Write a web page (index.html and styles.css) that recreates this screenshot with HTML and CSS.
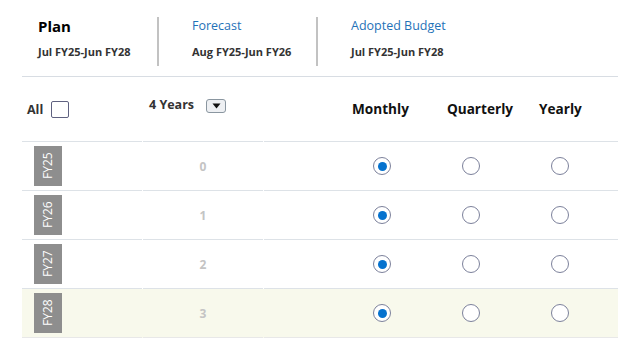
FILE: index.html
```html
<!DOCTYPE html>
<html>
<head>
    <title>Plan Periods</title>
    <link rel="stylesheet" href="styles.css">
</head>
<body>
    <div class="plan-page">
        <div class="summary">
            <div class="summary-item first">
                <div class="summary-title">Plan</div>
                <div class="summary-range">Jul FY25-Jun FY28</div>
            </div>
            <div class="summary-item">
                <a class="summary-link" href="#">Forecast</a>
                <div class="summary-range">Aug FY25-Jun FY26</div>
            </div>
            <div class="summary-item">
                <a class="summary-link" href="#">Adopted Budget</a>
                <div class="summary-range">Jul FY25-Jun FY28</div>
            </div>
        </div>

        <div class="period-table">
            <div class="row head">
                <div class="cell all-cell">
                    <span>All</span>
                    <span class="checkbox"></span>
                </div>
                <div class="cell years-cell">
                    <span>4 Years</span>
                    <button class="dropdown" type="button">
                        <svg width="9" height="6" viewBox="0 0 9 6"><path d="M0.5 0.5h8L4.5 5.5z" fill="#111"/></svg>
                    </button>
                </div>
                <div class="cell freq-head">
                    <span class="freq-label monthly">Monthly</span>
                    <span class="freq-label quarterly">Quarterly</span>
                    <span class="freq-label yearly">Yearly</span>
                </div>
            </div>

            <div class="row">
                <div class="cell tag-cell"><span class="fy-tag">FY25</span></div>
                <div class="cell num-cell">0</div>
                <div class="cell freq-cell">
                    <span class="radio checked"></span><span class="radio"></span><span class="radio"></span>
                </div>
            </div>
            <div class="row">
                <div class="cell tag-cell"><span class="fy-tag">FY26</span></div>
                <div class="cell num-cell">1</div>
                <div class="cell freq-cell">
                    <span class="radio checked"></span><span class="radio"></span><span class="radio"></span>
                </div>
            </div>
            <div class="row">
                <div class="cell tag-cell"><span class="fy-tag">FY27</span></div>
                <div class="cell num-cell">2</div>
                <div class="cell freq-cell">
                    <span class="radio checked"></span><span class="radio"></span><span class="radio"></span>
                </div>
            </div>
            <div class="row current">
                <div class="cell tag-cell"><span class="fy-tag">FY28</span></div>
                <div class="cell num-cell">3</div>
                <div class="cell freq-cell">
                    <span class="radio checked"></span><span class="radio"></span><span class="radio"></span>
                </div>
            </div>
        </div>
    </div>
</body>
</html>
```

FILE: styles.css
```css
body {
    margin: 0;
    font-family: "Open Sans", Arial, sans-serif;
    color: #333;
    background: #fff;
}
.plan-page {
    margin-left: 22px;
}
.summary {
    display: flex;
    padding: 17px 0 10px;
    border-bottom: 1px solid #d8dde3;
}
.summary-item {
    height: 49px;
    padding-left: 33px;
    width: 124px;
    border-left: 2px solid #c2c2c2;
}
.summary-item.first {
    padding-left: 16px;
    width: 119px;
    border-left: none;
}
.summary-title {
    font-size: 15px;
    font-weight: 700;
    color: #000;
    line-height: 18px;
}
.summary-link {
    display: block;
    font-size: 12.5px;
    color: #1f72b8;
    text-decoration: none;
    line-height: 18px;
}
.summary-range {
    margin-top: 9px;
    font-size: 11px;
    font-weight: 700;
    color: #333;
    line-height: 15px;
}
.row {
    display: grid;
    grid-template-columns: 120px 120px 1fr;
    column-gap: 1px;
    height: 49px;
}
.row.head {
    height: 65px;
}
.row.current {
    background: #f8f9ec;
}
.cell {
    display: flex;
    align-items: center;
    border-bottom: 1px solid #dde2e7;
}
.row.current .cell {
    border-bottom-color: #e8e8e8;
}
.all-cell {
    padding-left: 5px;
    gap: 8px;
    font-size: 12.5px;
    font-weight: 700;
}
.checkbox {
    width: 16px;
    height: 15px;
    border: 1px solid #5f6180;
    border-radius: 2px;
    background: #fff;
}
.years-cell {
    padding: 0 0 6px 6px;
    font-size: 12.5px;
    font-weight: 700;
}
.years-cell span {
    margin-bottom: 3px;
}
.dropdown {
    margin-left: 12px;
    width: 20px;
    height: 14px;
    padding: 0;
    display: flex;
    align-items: center;
    justify-content: center;
    border: 1px solid #8a96a0;
    border-radius: 3px;
    background: #eef0f3;
}
.freq-head {
    padding-bottom: 2px;
    font-size: 13.6px;
    font-weight: 700;
    color: #111;
}
.freq-label.monthly {
    margin-left: 88px;
}
.freq-label.quarterly {
    margin-left: 38px;
}
.freq-label.yearly {
    margin-left: 26px;
}
.tag-cell {
    align-items: flex-start;
    padding: 4px 0 0 12px;
}
.fy-tag {
    width: 28px;
    height: 40px;
    background: #8e8e8e;
    color: #fff;
    font-size: 12px;
    line-height: 28px;
    text-align: center;
    writing-mode: vertical-rl;
    transform: rotate(180deg);
}
.num-cell {
    justify-content: center;
    font-size: 12px;
    font-weight: 700;
    color: #c4c4c4;
}
.freq-cell {
    padding-left: 109px;
    gap: 71px;
}
.radio {
    box-sizing: border-box;
    width: 18px;
    height: 18px;
    border: 1.3px solid #7c819b;
    border-radius: 50%;
    background: #fff;
    display: flex;
    align-items: center;
    justify-content: center;
}
.radio.checked::after {
    content: "";
    width: 9px;
    height: 9px;
    border-radius: 50%;
    background: #0572ce;
}
```
